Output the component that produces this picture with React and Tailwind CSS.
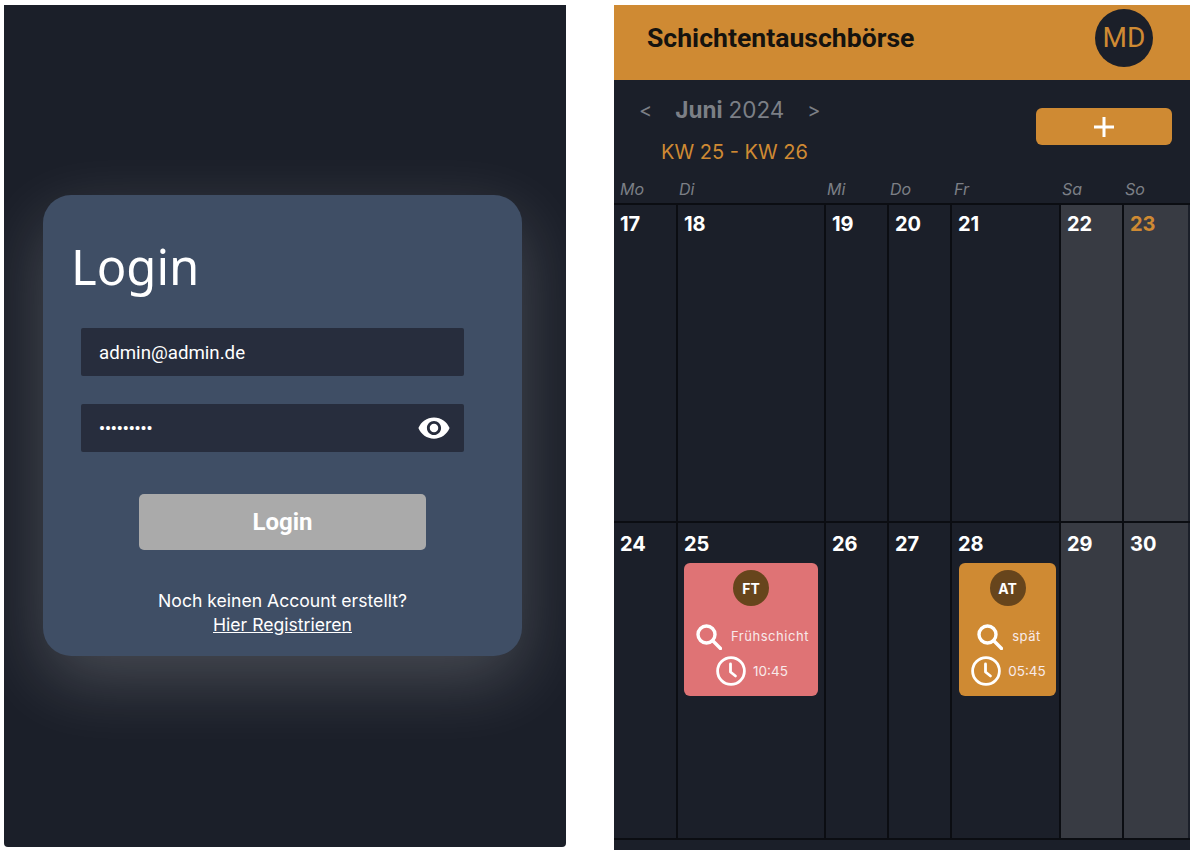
import React from "react";
import { MdVisibility } from "react-icons/md";

const cols = [
  { w: "w-[62px]", name: "Mo", pl: "pl-[6px]" },
  { w: "w-[148px]", name: "Di", pl: "pl-[3px]" },
  { w: "w-[63px]", name: "Mi", pl: "pl-[3px]" },
  { w: "w-[63px]", name: "Do", pl: "pl-[3px]" },
  { w: "w-[109px]", name: "Fr", pl: "pl-[4px]" },
  { w: "w-[63px]", name: "Sa", pl: "pl-[3px]" },
  { w: "w-[66px]", name: "So", pl: "pl-[3px]" },
];

function Search() {
  return (
    <svg width="26" height="26" viewBox="0 0 26 26" fill="none" stroke="#fff" strokeWidth="3.4" strokeLinecap="round">
      <circle cx="10.5" cy="10.5" r="8.5" />
      <path d="M16.8 16.8 24.5 24.5" />
    </svg>
  );
}

function Clock() {
  return (
    <svg width="30" height="30" viewBox="0 0 30 30" fill="none" stroke="#fff" strokeWidth="2.8" strokeLinecap="round" strokeLinejoin="round">
      <circle cx="15" cy="15" r="13.4" />
      <path d="M14.5 8v8l5 4" />
    </svg>
  );
}

function Shift({ color, initials, label, time, width, searchGap, clockGap, offset }) {
  return (
    <div className={`mt-[6px] flex h-[133px] ${width} ${offset} flex-col items-center rounded-[6px] pt-[7px] text-white ${color}`}>
      <div className="flex h-[36px] w-[36px] shrink-0 items-center justify-center rounded-full bg-[#67451c] font-['Inter',sans-serif] text-[14px] font-bold">
        {initials}
      </div>
      <div className={`mt-[16px] flex h-[30px] items-center pl-[3px] ${searchGap} font-['Inter',sans-serif] text-[13px] tracking-[0.55px] text-[#f8eaea]`}>
        <Search />
        <span>{label}</span>
      </div>
      <div className={`mt-[4px] flex h-[30px] items-center pl-[2px] ${clockGap} font-['Inter',sans-serif] text-[13.5px] text-[#f8eaea]`}>
        <Clock />
        <span>{time}</span>
      </div>
    </div>
  );
}

function Cell({ col, i, num, weekend, accent, children, height, pt }) {
  return (
    <div className={`${col.w} ${height} ${pt} shrink-0 ${i > 0 ? "border-l-2 border-[#0b0d12]" : ""} ${weekend ? "bg-[#383b43]" : ""} px-[6px]`}>
      <div className={`font-['Inter',sans-serif] text-[20px] leading-[26px] font-bold ${accent ? "text-[#cf8a33]" : "text-white"}`}>{num}</div>
      {children}
    </div>
  );
}

export default function App() {
  const week1 = ["17", "18", "19", "20", "21", "22", "23"];
  const week2 = ["24", "25", "26", "27", "28", "29", "30"];
  return (
    <div className="flex h-[850px] w-[1190px] overflow-hidden bg-white">
      <div className="mt-[5px] ml-[4px] flex h-[842px] w-[562px] items-center rounded-b-[4px] bg-[#1b1f29] pb-[2px] pl-[39px]">
        <div className="flex h-[461px] w-[479px] flex-col rounded-[28px] bg-[#3f4e65] shadow-[0_24px_70px_rgba(255,255,255,0.2)]">
          <h1 className="mt-[37px] ml-[28px] font-['Noto_Sans',sans-serif] text-[49px] leading-[68px] text-white">Login</h1>
          <div className="mt-[28px] ml-[38px] flex h-[48px] w-[383px] items-center rounded-[2px] bg-[#272d3d] pt-[3px] pl-[18px] font-['Roboto',sans-serif] text-[18.7px] text-white">
            admin@admin.de
          </div>
          <div className="mt-[28px] ml-[38px] flex h-[48px] w-[383px] items-center justify-between rounded-[2px] bg-[#272d3d] pr-[13px] pl-[18px] font-['Roboto',sans-serif] text-white">
            <span className="pt-[4px] text-[16.5px] font-bold">•••••••••</span>
            <MdVisibility size={34} color="#fff" />
          </div>
          <div className="mt-[42px] ml-[96px] flex h-[56px] w-[287px] items-center justify-center rounded-[5px] bg-[#aaaaaa] font-['Roboto',sans-serif] text-[24px] font-bold text-white">
            Login
          </div>
          <div className="mt-[39px] text-center font-['Inter',sans-serif] text-[17.6px] leading-[24px] text-white">
            <div>Noch keinen Account erstellt?</div>
            <div className="underline">Hier Registrieren</div>
          </div>
        </div>
      </div>

      <div className="mt-[5px] ml-[48px] flex h-[845px] w-[576px] flex-col bg-[#1b1f29]">
        <header className="flex h-[75px] shrink-0 items-center justify-between bg-[#cf8a33] pr-[37px] pb-[9px] pl-[33px]">
          <span className="font-['Roboto',sans-serif] text-[26.6px] font-bold text-[#15130f]">Schichtentauschbörse</span>
          <div className="flex h-[58px] w-[58px] items-center justify-center rounded-full bg-[#1b1f29] font-['Roboto',sans-serif] text-[28px] text-[#cf8a33]">
            MD
          </div>
        </header>
        <div className="flex h-[100px] shrink-0 items-start justify-between pr-[18px]">
          <div className="pt-[15px]">
            <div className="flex items-center pl-[25px] font-['Inter',sans-serif] text-[22.5px] leading-[30px] text-[#7c7f86]">
              <span className="text-[20px]">&lt;</span>
              <span className="ml-[23px] font-bold">Juni</span>
              <span className="ml-[6px]">2024</span>
              <span className="ml-[23px] text-[20px]">&gt;</span>
            </div>
            <div className="mt-[14px] pl-[47px] font-['Inter',sans-serif] text-[20px] leading-[26px] text-[#cf8a33]">KW 25 - KW 26</div>
          </div>
          <div className="mt-[28px] flex h-[37px] w-[136px] items-center justify-center rounded-[6px] bg-[#cf8a33]">
            <svg width="24" height="24" viewBox="0 0 24 24" fill="none" stroke="#fff" strokeWidth="3">
              <path d="M12 2v20M2 12h20" />
            </svg>
          </div>
        </div>
        <div className="flex h-[23px] shrink-0 items-center pb-[5px] font-['Inter',sans-serif] text-[16px] text-[#7c7f86] italic">
          {cols.map((c) => (
            <div key={c.name} className={`${c.w} ${c.pl} shrink-0`}>{c.name}</div>
          ))}
        </div>
        <div className="flex shrink-0 border-t-2 border-[#0b0d12]">
          {cols.map((c, i) => (
            <Cell key={c.name} col={c} i={i} num={week1[i]} weekend={i > 4} accent={i === 6} height="h-[316px]" pt="pt-[6px]" />
          ))}
        </div>
        <div className="flex shrink-0 border-y-2 border-[#0b0d12]">
          {cols.map((c, i) => (
            <Cell key={c.name} col={c} i={i} num={week2[i]} weekend={i > 4} height="h-[315px]" pt="pt-[8px]">
              {i === 1 && (
                <Shift color="bg-[#df7375]" initials="FT" label="Frühschicht" time="10:45" width="w-[134px]" offset="" searchGap="gap-[9px]" clockGap="gap-[7px]" />
              )}
              {i === 4 && (
                <Shift color="bg-[#cf8a33]" initials="AT" label="spät" time="05:45" width="w-[97px]" offset="ml-[1px]" searchGap="gap-[9px]" clockGap="gap-[7px]" />
              )}
            </Cell>
          ))}
        </div>
      </div>
    </div>
  );
}
